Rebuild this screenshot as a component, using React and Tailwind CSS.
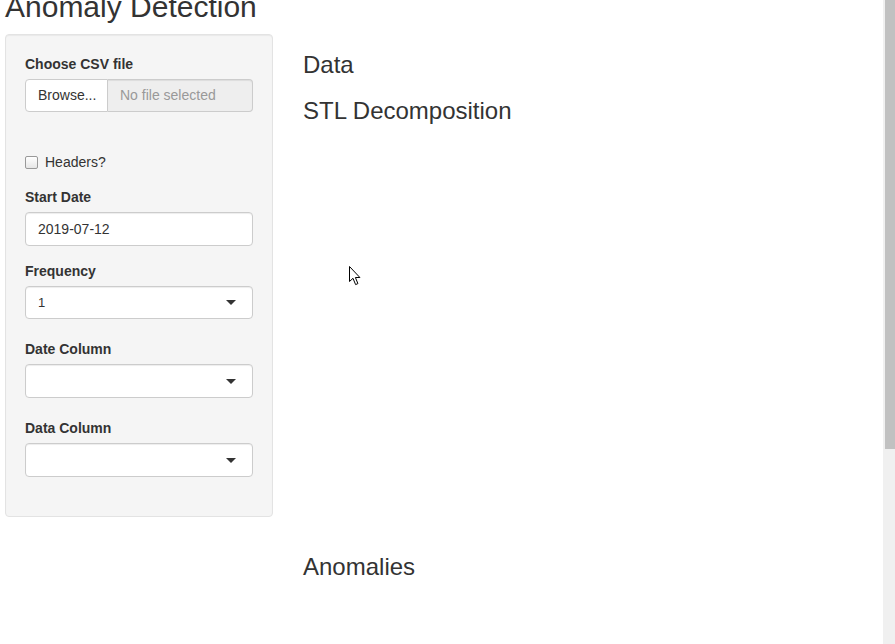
import React from 'react';

const Label = ({ children, className = '' }) => (
  <div className={`h-[20px] text-[14px] font-bold leading-[20px] mb-[5px] ${className}`}>{children}</div>
);

const Caret = () => (
  <span className="h-0 w-0 border-x-[5px] border-t-[5px] border-x-transparent border-t-[#333]" />
);

const SelectBox = ({ value, className = '' }) => (
  <div
    className={`flex items-center justify-between rounded-[4px] border border-[#ccc] bg-white pl-[12px] pr-[16px] shadow-[inset_0_1px_1px_rgba(0,0,0,0.075)] ${className}`}
  >
    <span className="text-[13px] leading-[18px]">{value}</span>
    <Caret />
  </div>
);

const Cursor = () => (
  <svg className="absolute left-[349px] top-[266px]" width="13" height="20" viewBox="0 0 13 20">
    <path
      d="M0.5 0.5 L0.5 15.5 L4 12.3 L6.6 18.6 L8.9 17.6 L6.4 11.5 L10.9 11.5 Z"
      fill="#fff"
      stroke="#000"
      strokeWidth="1"
      strokeLinejoin="miter"
    />
  </svg>
);

export default function App() {
  return (
    <div className="relative flex h-[644px] w-full overflow-hidden bg-white font-['Liberation_Sans',Arial,sans-serif] text-[#333]">
      <div className="flex-1 overflow-hidden pl-[5px]">
        <h2 className="-mt-[10px] mb-[11px] text-[30px] font-normal leading-[33px]">Anomaly Detection</h2>

        <div className="flex items-start">
          {/* sidebar well */}
          <div className="w-[268px] shrink-0 rounded-[4px] border border-[#e3e3e3] bg-[#f5f5f5] p-[19px] shadow-[inset_0_1px_1px_rgba(0,0,0,0.05)]">
            <Label>Choose CSV file</Label>
            <div className="mb-[40px] flex h-[33px] text-[14px]">
              <div className="flex w-[83px] items-center rounded-l-[4px] border border-[#ccc] bg-white pl-[12px]">
                Browse...
              </div>
              <div className="flex flex-1 items-center rounded-r-[4px] border border-l-0 border-[#ccc] bg-[#eee] pl-[12px] text-[#999] shadow-[inset_0_1px_1px_rgba(0,0,0,0.075)]">
                No file selected
              </div>
            </div>

            <div className="mb-[15px] flex h-[20px] items-center text-[14px]">
              <span className="mr-[7px] h-[13px] w-[13px] rounded-[2px] border border-[#999] bg-gradient-to-b from-[#fff] to-[#e6e6e6]" />
              Headers?
            </div>

            <Label>Start Date</Label>
            <div className="mb-[15px] flex h-[34px] items-center rounded-[4px] border border-[#ccc] bg-white pl-[12px] text-[14px] shadow-[inset_0_1px_1px_rgba(0,0,0,0.075)]">
              2019-07-12
            </div>

            <Label>Frequency</Label>
            <SelectBox value="1" className="mb-[20px] h-[33px]" />

            <Label>Date Column</Label>
            <SelectBox value="" className="mb-[20px] h-[34px]" />

            <Label>Data Column</Label>
            <SelectBox value="" className="mb-[20px] h-[34px]" />
          </div>

          {/* main panel */}
          <div className="ml-[30px] flex-1 pt-[18px]">
            <h3 className="mb-[20px] h-[26px] text-[24px] font-normal leading-[26px]">Data</h3>
            <h3 className="mb-[10px] h-[26px] text-[24px] font-normal leading-[26px]">STL Decomposition</h3>
            <div className="mb-[20px] h-[400px]" />
            <h3 className="h-[26px] text-[24px] font-normal leading-[26px]">Anomalies</h3>
          </div>
        </div>
      </div>

      {/* scrollbar */}
      <div className="w-[12px] shrink-0 bg-[#f0f0f0] pl-[2px]">
        <div className="h-[449px] bg-[#c1c1c1]" />
      </div>

      <Cursor />
    </div>
  );
}
